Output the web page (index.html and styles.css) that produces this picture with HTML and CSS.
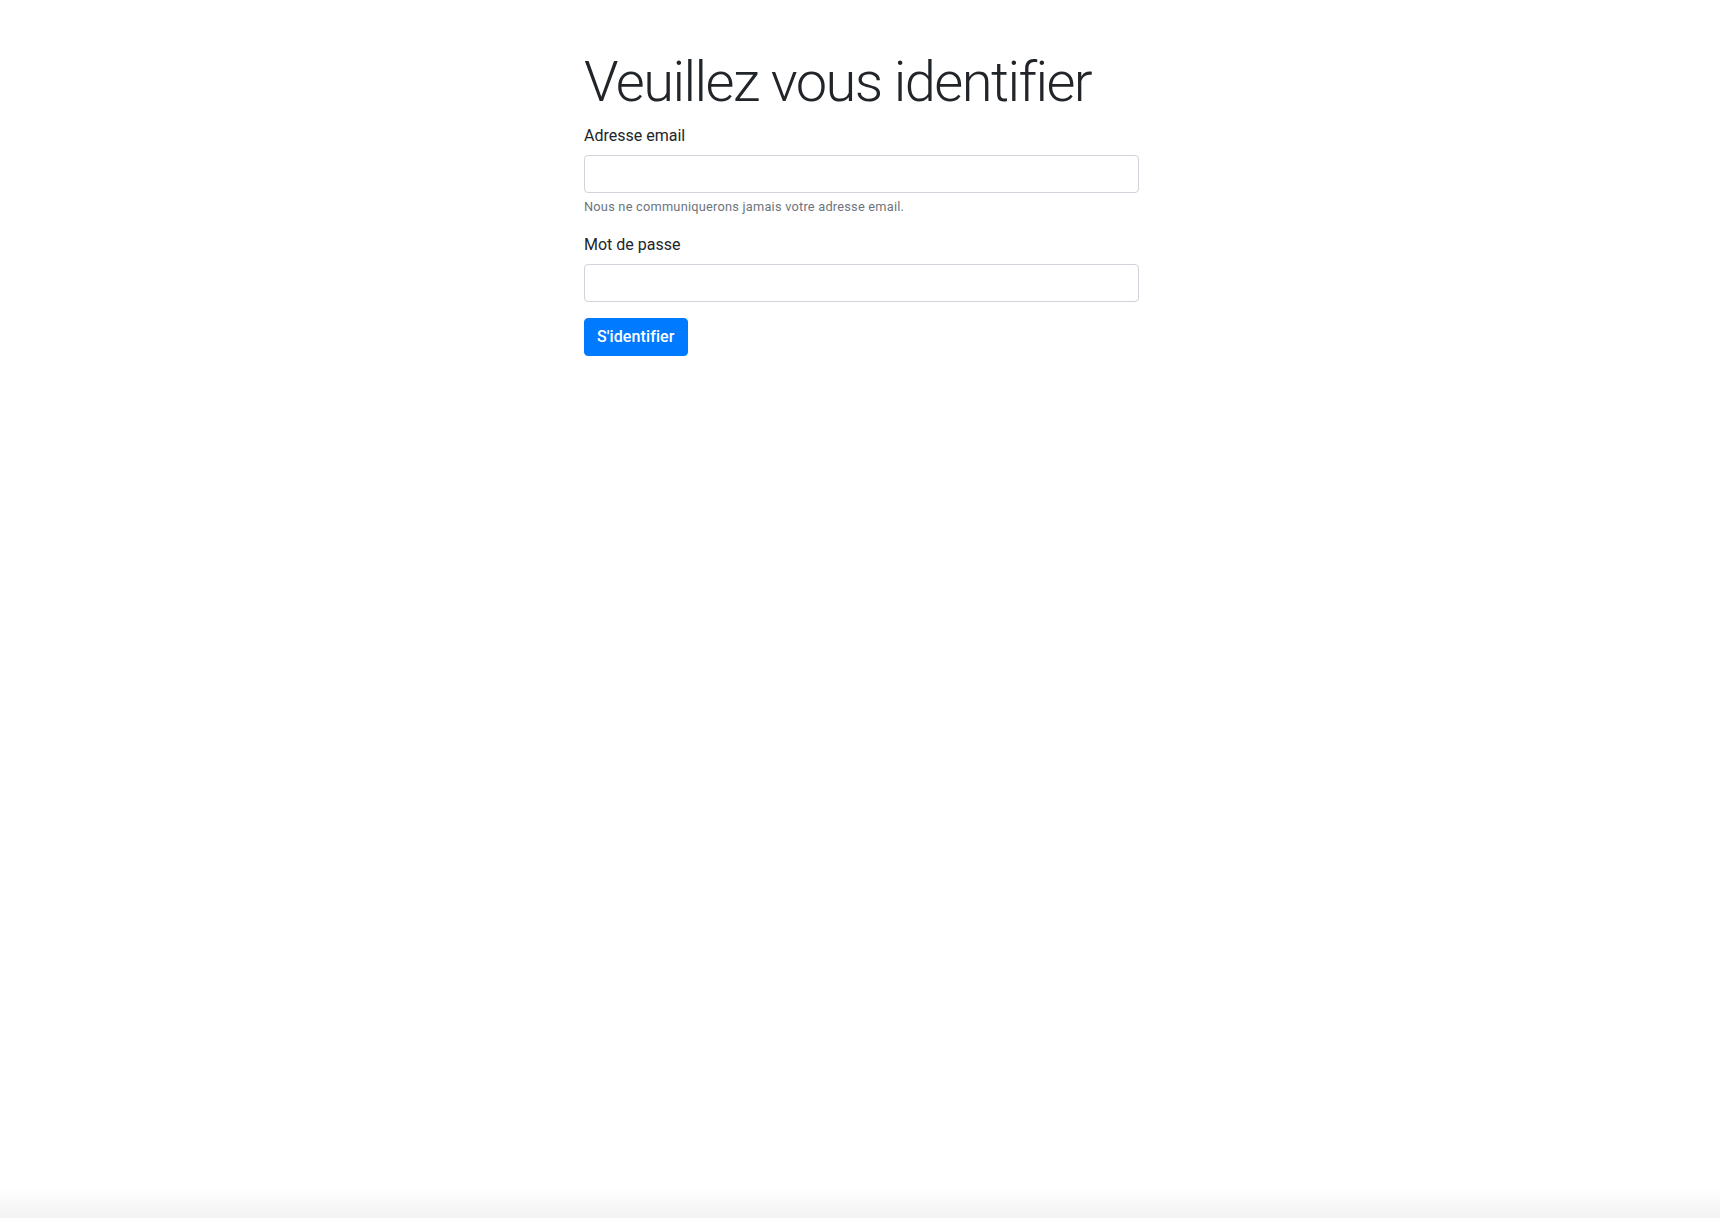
FILE: index.html
```html
<!DOCTYPE html>
<html lang="fr">
<head>
<meta charset="utf-8">
<title>Veuillez vous identifier</title>
<link rel="stylesheet" href="styles.css">
</head>
<body>
<main class="login">
  <h1 class="login-title">Veuillez vous identifier</h1>
  <form class="login-form">
    <div class="form-group">
      <label class="form-label" for="email">Adresse email</label>
      <input class="form-control" type="email" id="email">
      <small class="form-text">Nous ne communiquerons jamais votre adresse email.</small>
    </div>
    <div class="form-group">
      <label class="form-label" for="password">Mot de passe</label>
      <input class="form-control" type="password" id="password">
    </div>
    <button class="btn-primary" type="submit">S'identifier</button>
  </form>
</main>
</body>
</html>
```

FILE: styles.css
```css
html {
  min-height: 100%;
  background: linear-gradient(to bottom, #ffffff calc(100% - 30px), #f2f2f2 100%);
}
body {
  margin: 0;
  font-family: Roboto, "Liberation Sans", Arial, sans-serif;
  font-size: 16px;
  line-height: 1.5;
  color: #212529;
}
.login {
  width: 555px;
  margin: 48px 0 0 calc(50% - 276px);
}
.login-title {
  margin: 0 0 7px;
  padding-top: 1px;
  font-size: 56px;
  font-weight: 300;
  line-height: 1.2;
  letter-spacing: -1.55px;
  color: #212529;
}
.form-group {
  margin-bottom: 16px;
}
.form-label {
  display: block;
  margin-bottom: 8px;
  padding-top: 1px;
  line-height: 23px;
}
.form-control {
  display: block;
  box-sizing: border-box;
  width: 100%;
  height: 38px;
  padding: 6px 12px;
  font: inherit;
  border: 1px solid #ced4da;
  border-radius: 4px;
  background: #fff;
}
.form-text {
  display: block;
  margin-top: 4px;
  font-size: 12.8px;
  line-height: 19.2px;
  letter-spacing: 0.22px;
  color: #6c757d;
}
.btn-primary {
  display: inline-block;
  box-sizing: border-box;
  height: 38px;
  padding: 6px 12px;
  font: inherit;
  font-weight: 500;
  letter-spacing: 0.1px;
  color: #fff;
  background: #007bff;
  border: 1px solid #007bff;
  border-radius: 4px;
  cursor: pointer;
}
```
